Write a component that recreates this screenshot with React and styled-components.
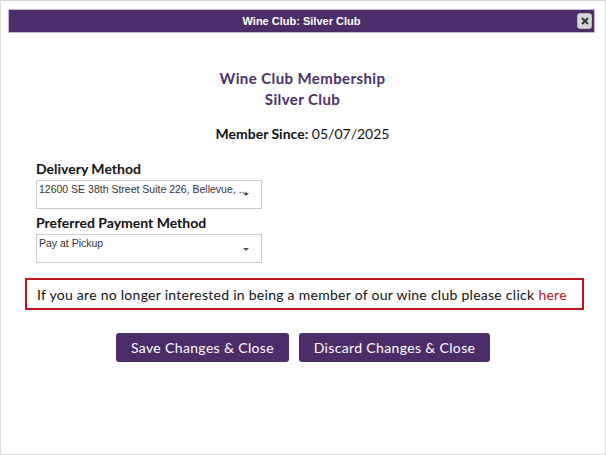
import React from "react";
import styled, { createGlobalStyle } from "styled-components";

const Global = createGlobalStyle`
  html, body { margin: 0; padding: 0; background: #fff; }
  body { font-family: Lato, "Open Sans", sans-serif; }
  * { box-sizing: border-box; }
`;

const Dialog = styled.div`
  width: 606px;
  height: 455px;
  border: 1px solid #dcdcdc;
  border-top: 1px solid #d4d4d4;
  background: #fff;
  padding: 8px 10px 0 7px;
  display: flex;
  flex-direction: column;
`;

const TitleBar = styled.div`
  height: 24px;
  background: #4b2d69;
  border: 1px solid #c9b9dc;
  position: relative;
  display: flex;
  align-items: center;
  justify-content: center;
  color: #fff;
  font-family: "Liberation Sans", Arial, sans-serif;
  font-weight: bold;
  font-size: 11px;
`;

const CloseBtn = styled.div`
  position: absolute;
  right: 2px;
  top: 3px;
  width: 15px;
  height: 16px;
  border-radius: 3px;
  background: #d6d6d6;
  border: 1px solid #bbb;
  display: flex;
  align-items: center;
  justify-content: center;
`;

const Body = styled.div`
  display: flex;
  flex-direction: column;
  padding: 0 0 0 28px;
`;

const Heading = styled.div`
  margin-top: 35px;
  text-align: center;
  color: #4b3068;
  font-size: 15px;
  font-weight: 700;
  letter-spacing: 0.4px;
  line-height: 21px;
  padding-right: 26px;
`;

const Since = styled.div`
  margin-top: 15px;
  text-align: center;
  font-size: 14px;
  color: #111;
  padding-right: 26px;
  b { font-weight: 700; }
`;

const Label = styled.div`
  font-size: 14px;
  font-weight: 700;
  color: #111;
  margin-top: ${(p) => p.$mt}px;
  line-height: 18px;
`;

const Select = styled.div`
  margin-top: 2px;
  width: 226px;
  height: 29px;
  border: 1px solid #ccc;
  font-family: "Liberation Sans", Arial, sans-serif;
  font-size: 10.5px;
  color: #333;
  padding: 2px 2px;
  position: relative;
  white-space: nowrap;
  overflow: hidden;
`;

const Caret = styled.div`
  position: absolute;
  right: 12px;
  top: ${(p) => p.$top}px;
  width: 0;
  height: 0;
  border-left: 3px solid transparent;
  border-right: 3px solid transparent;
  border-top: 3px solid #555;
`;

const Notice = styled.div`
  margin: 15px 11px 0 -11px;
  height: 32px;
  border: 2px solid #c0161e;
  display: flex;
  align-items: center;
  padding-left: 10px;
  font-size: 14px;
  letter-spacing: 0.27px;
  color: #111;
  span { color: #b0161e; margin-left: 4px; }
`;

const Buttons = styled.div`
  display: flex;
  justify-content: center;
  gap: 10px;
  margin-top: 23px;
  padding-right: 25px;
`;

const Button = styled.div`
  height: 29px;
  width: ${(p) => p.$w}px;
  background: #4b2d69;
  border-radius: 3px;
  color: #fff;
  font-size: 14px;
  letter-spacing: 0.35px;
  display: flex;
  align-items: center;
  justify-content: center;
`;

export default function App() {
  return (
    <>
      <Global />
      <Dialog>
        <TitleBar>
          Wine Club: Silver Club
          <CloseBtn>
            <svg width="8" height="8" viewBox="0 0 8 8">
              <path d="M1 1L7 7M7 1L1 7" stroke="#333" strokeWidth="2" />
            </svg>
          </CloseBtn>
        </TitleBar>
        <Body>
          <Heading>
            Wine Club Membership
            <br />
            Silver Club
          </Heading>
          <Since>
            <b>Member Since:</b> 05/07/2025
          </Since>
          <Label $mt={18}>Delivery Method</Label>
          <Select>
            12600 SE 38th Street Suite 226, Bellevue, ...
            <Caret $top={12} />
          </Select>
          <Label $mt={5}>Preferred Payment Method</Label>
          <Select>
            Pay at Pickup
            <Caret $top={13} />
          </Select>
          <Notice>
            If you are no longer interested in being a member of our wine club please click
            <span>here</span>
          </Notice>
          <Buttons>
            <Button $w={173}>Save Changes &amp; Close</Button>
            <Button $w={191}>Discard Changes &amp; Close</Button>
          </Buttons>
        </Body>
      </Dialog>
    </>
  );
}
